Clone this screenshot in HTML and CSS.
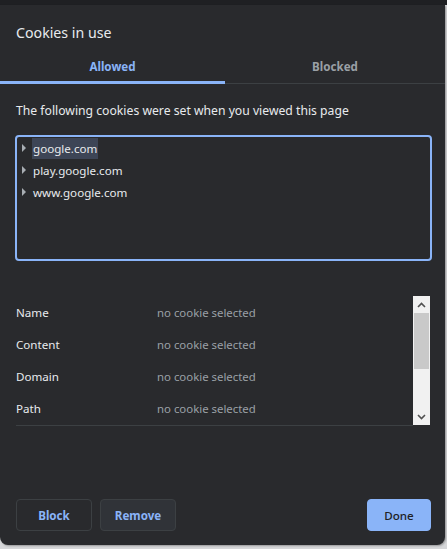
FILE: index.html
```html
<!DOCTYPE html>
<html>
<head>
<meta charset="utf-8">
<link rel="stylesheet" href="styles.css">
</head>
<body>
<div class="topband"></div>
<div class="dialog">
  <div class="title">Cookies in use</div>
  <div class="tabs">
    <div class="tab active">Allowed</div>
    <div class="tab">Blocked</div>
  </div>
  <div class="intro">The following cookies were set when you viewed this page</div>
  <div class="tree">
    <div class="node"><span class="tri"></span><span class="label sel">google.com</span></div>
    <div class="node"><span class="tri"></span><span class="label">play.google.com</span></div>
    <div class="node"><span class="tri"></span><span class="label">www.google.com</span></div>
  </div>
  <div class="details">
    <div class="rows">
      <div class="row"><span class="key">Name</span><span class="val">no cookie selected</span></div>
      <div class="row"><span class="key">Content</span><span class="val">no cookie selected</span></div>
      <div class="row"><span class="key">Domain</span><span class="val">no cookie selected</span></div>
      <div class="row"><span class="key">Path</span><span class="val">no cookie selected</span></div>
    </div>
    <div class="scrollbar">
      <div class="arrow up"><svg width="9" height="6" viewBox="0 0 9 6"><path d="M1 5 L4.5 1.5 L8 5" fill="none" stroke="#505050" stroke-width="1.6"/></svg></div>
      <div class="thumb"></div>
      <div class="track"></div>
      <div class="arrow down"><svg width="9" height="6" viewBox="0 0 9 6"><path d="M1 1 L4.5 4.5 L8 1" fill="none" stroke="#505050" stroke-width="1.6"/></svg></div>
    </div>
  </div>
  <div class="buttons">
    <button class="btn">Block</button>
    <button class="btn filled">Remove</button>
    <span class="spacer"></span>
    <button class="btn primary">Done</button>
  </div>
</div>
</body>
</html>
```
FILE: styles.css
```css
html, body {
  margin: 0;
  padding: 0;
}
body {
  width: 447px;
  height: 549px;
  background: #d6d7d9;
  font-family: "Noto Sans", "Open Sans", sans-serif;
  font-size: 12px;
  color: #e8eaed;
  overflow: hidden;
}
.topband {
  height: 5px;
  background: #1f2023;
}
.dialog {
  background: #292a2d;
  height: 540px;
  width: 445px;
  border-radius: 0 0 8px 8px;
  display: flex;
  flex-direction: column;
  box-shadow: 1px 1px 2px rgba(0,0,0,0.3);
}
.title {
  font-size: 14.2px;
  padding: 16px 16px 0 16px;
  height: 24px;
  line-height: 24px;
}
.tabs {
  display: flex;
  margin-top: 11px;
  border-bottom: 1px solid #3c4043;
}
.tab {
  flex: 1;
  text-align: center;
  font-weight: 700;
  font-size: 11.6px;
  color: #9aa0a6;
  height: 27px;
  line-height: 22px;
  box-sizing: border-box;
}
.tab.active {
  flex: 0 0 225px;
  color: #8ab4f8;
  border-bottom: 3px solid #8ab4f8;
  margin-bottom: -1px;
  height: 28px;
}
.intro {
  padding: 18px 16px 0 16px;
  font-size: 12.2px;
  line-height: 17px;
}
.tree {
  margin: 16px 13px 0 15px;
  height: 126px;
  box-sizing: border-box;
  border: 2px solid #8ab4f8;
  border-radius: 4px;
  padding: 0 0 0 5px;
}
.node {
  display: flex;
  align-items: center;
  height: 22px;
}
.tri {
  width: 0;
  height: 0;
  border-top: 4px solid transparent;
  border-bottom: 4px solid transparent;
  border-left: 4px solid #a8adb3;
  margin-right: 6px;
}
.label {
  font-size: 11.6px;
  line-height: 21px;
  padding: 0 1px;
}
.label.sel {
  background: #3d4556;
}
.details {
  display: flex;
  margin: 35px 15px 0 16px;
  height: 130px;
}
.rows {
  flex: 1;
  border-bottom: 1px solid #3c4043;
  height: 129px;
  padding-top: 0;
}
.row {
  display: flex;
  align-items: center;
  height: 32px;
}
.key {
  width: 141px;
  font-size: 11.6px;
}
.val {
  color: #9aa0a6;
  font-size: 11.4px;
}
.scrollbar {
  width: 17px;
  height: 129px;
  background: #f1f1f1;
  display: flex;
  flex-direction: column;
}
.arrow {
  height: 17px;
  display: flex;
  align-items: center;
  justify-content: center;
}
.thumb {
  margin: 0 1px;
  height: 56px;
  background: #c9c9c9;
}
.track {
  flex: 1;
}
.buttons {
  display: flex;
  margin: 73px 14px 0 16px;
  gap: 8px;
}
.spacer {
  flex: 1;
}
.btn {
  font-family: "Noto Sans", "Open Sans", sans-serif;
  font-size: 11.6px;
  font-weight: 700;
  height: 32px;
  width: 76px;
  border: 1px solid #3c4043;
  border-radius: 4px;
  background: transparent;
  color: #8ab4f8;
  padding: 0;
}
.btn.filled {
  background: #303338;
}
.btn.primary {
  background: #8ab4f8;
  border-color: #8ab4f8;
  color: #202124;
  font-weight: 500;
  width: 64px;
}
```
